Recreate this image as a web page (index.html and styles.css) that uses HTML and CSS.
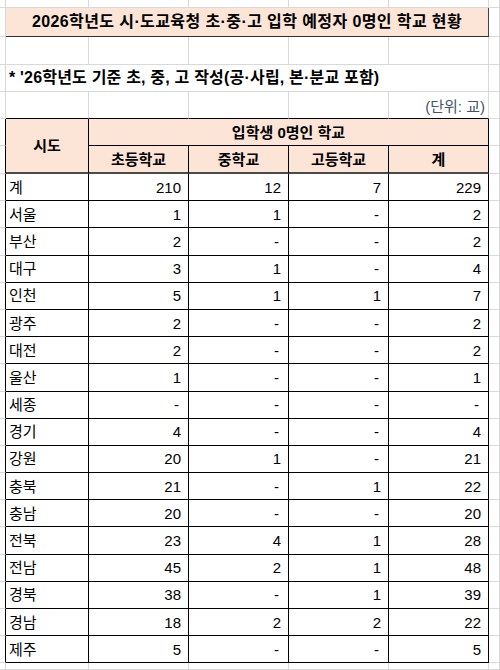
FILE: index.html
```html
<!DOCTYPE html>
<html lang="ko">
<head>
<meta charset="utf-8">
<title>2026학년도 시·도교육청 초·중·고 입학 예정자 0명인 학교 현황</title>
<link rel="stylesheet" href="styles.css">
</head>
<body>
<div class="sheet">
  <div class="c"></div><div class="c"></div><div class="c"></div><div class="c"></div><div class="c"></div><div class="c"></div><div class="c"></div>

  <div class="c"></div><div class="c title">2026학년도 시·도교육청 초·중·고 입학 예정자 0명인 학교 현황</div><div class="c"></div>

  <div class="c"></div><div class="c"></div><div class="c"></div><div class="c"></div><div class="c"></div><div class="c"></div><div class="c"></div>

  <div class="c"></div><div class="c note">* '26학년도 기준 초, 중, 고 작성(공·사립, 본·분교 포함)</div><div class="c"></div>

  <div class="c"></div><div class="c top"></div><div class="c top"></div><div class="c top"></div><div class="c top"></div><div class="c top unit">(단위: 교)</div><div class="c"></div>

  <div class="c edge"></div><div class="c t hd sido">시도</div><div class="c t hd group">입학생 0명인 학교</div><div class="c"></div>
  <div class="c edge"></div><div class="c t hd sub">초등학교</div><div class="c t hd sub">중학교</div><div class="c t hd sub">고등학교</div><div class="c t hd sub">계</div><div class="c"></div>

  <div class="c edge"></div><div class="c t name">계</div><div class="c t num">210</div><div class="c t num">12</div><div class="c t num">7</div><div class="c t num">229</div><div class="c"></div>
  <div class="c edge"></div><div class="c t name">서울</div><div class="c t num">1</div><div class="c t num">1</div><div class="c t num z">-</div><div class="c t num">2</div><div class="c"></div>
  <div class="c edge"></div><div class="c t name">부산</div><div class="c t num">2</div><div class="c t num z">-</div><div class="c t num z">-</div><div class="c t num">2</div><div class="c"></div>
  <div class="c edge"></div><div class="c t name">대구</div><div class="c t num">3</div><div class="c t num">1</div><div class="c t num z">-</div><div class="c t num">4</div><div class="c"></div>
  <div class="c edge"></div><div class="c t name">인천</div><div class="c t num">5</div><div class="c t num">1</div><div class="c t num">1</div><div class="c t num">7</div><div class="c"></div>
  <div class="c edge"></div><div class="c t name">광주</div><div class="c t num">2</div><div class="c t num z">-</div><div class="c t num z">-</div><div class="c t num">2</div><div class="c"></div>
  <div class="c edge"></div><div class="c t name">대전</div><div class="c t num">2</div><div class="c t num z">-</div><div class="c t num z">-</div><div class="c t num">2</div><div class="c"></div>
  <div class="c edge"></div><div class="c t name">울산</div><div class="c t num">1</div><div class="c t num z">-</div><div class="c t num z">-</div><div class="c t num">1</div><div class="c"></div>
  <div class="c edge"></div><div class="c t name">세종</div><div class="c t num z">-</div><div class="c t num z">-</div><div class="c t num z">-</div><div class="c t num z">-</div><div class="c"></div>
  <div class="c edge"></div><div class="c t name">경기</div><div class="c t num">4</div><div class="c t num z">-</div><div class="c t num z">-</div><div class="c t num">4</div><div class="c"></div>
  <div class="c edge"></div><div class="c t name">강원</div><div class="c t num">20</div><div class="c t num">1</div><div class="c t num z">-</div><div class="c t num">21</div><div class="c"></div>
  <div class="c edge"></div><div class="c t name">충북</div><div class="c t num">21</div><div class="c t num z">-</div><div class="c t num">1</div><div class="c t num">22</div><div class="c"></div>
  <div class="c edge"></div><div class="c t name">충남</div><div class="c t num">20</div><div class="c t num z">-</div><div class="c t num z">-</div><div class="c t num">20</div><div class="c"></div>
  <div class="c edge"></div><div class="c t name">전북</div><div class="c t num">23</div><div class="c t num">4</div><div class="c t num">1</div><div class="c t num">28</div><div class="c"></div>
  <div class="c edge"></div><div class="c t name">전남</div><div class="c t num">45</div><div class="c t num">2</div><div class="c t num">1</div><div class="c t num">48</div><div class="c"></div>
  <div class="c edge"></div><div class="c t name">경북</div><div class="c t num">38</div><div class="c t num z">-</div><div class="c t num">1</div><div class="c t num">39</div><div class="c"></div>
  <div class="c edge"></div><div class="c t name">경남</div><div class="c t num">18</div><div class="c t num">2</div><div class="c t num">2</div><div class="c t num">22</div><div class="c"></div>
  <div class="c edge"></div><div class="c t name">제주</div><div class="c t num">5</div><div class="c t num z">-</div><div class="c t num z">-</div><div class="c t num">5</div><div class="c"></div>

  <div class="c"></div><div class="c"></div><div class="c"></div><div class="c"></div><div class="c"></div><div class="c"></div><div class="c"></div>
</div>
</body>
</html>
```
FILE: styles.css
```css
html, body {
  margin: 0;
  padding: 0;
  background: #ffffff;
}

body {
  width: 500px;
  height: 670px;
  overflow: hidden;
  font-family: "Liberation Sans", "Noto Sans CJK KR", sans-serif;
  font-size: 15px;
  color: #000000;
}

.sheet {
  display: grid;
  grid-template-columns: 6px 83px 100px 100px 100px 100px 1fr;
  grid-template-rows: 8px 29px 27.5px 27.5px 27px 27px 28px repeat(18, 27.2px) 1fr;
  height: 670px;
}

.c {
  box-sizing: border-box;
  border-right: 1px solid #d9d9d9;
  border-bottom: 1px solid #d9d9d9;
  display: flex;
  align-items: center;
  white-space: nowrap;
  line-height: 1;
  min-width: 0;
}

.title {
  grid-column: span 5;
  justify-content: center;
  background: #fce4d6;
  font-size: 16px;
  font-weight: 700;
  letter-spacing: 0.4px;
  border-right-color: #444444;
  border-bottom-color: #333333;
}

.note {
  grid-column: span 5;
  padding-left: 3px;
  font-size: 16px;
  font-weight: 700;
  letter-spacing: 0.2px;
}

.top {
  border-bottom-color: #000000;
}

.unit {
  justify-content: flex-end;
  padding-right: 3px;
  padding-top: 2px;
  color: #44546a;
}

.edge {
  border-right-color: #000000;
}

.t {
  border-right-color: #000000;
  border-bottom-color: #000000;
}

.hd {
  background: #fce4d6;
  font-weight: 700;
  justify-content: center;
}

.sido {
  grid-row: span 2;
  border-bottom: 2px solid #4a4a4a;
}

.group {
  grid-column: span 4;
}

.sub {
  border-bottom: 2px solid #4a4a4a;
}

.name {
  padding-left: 3px;
}

.num {
  justify-content: flex-end;
  padding-right: 7px;
}

.z {
  padding-right: 9px;
}
```
